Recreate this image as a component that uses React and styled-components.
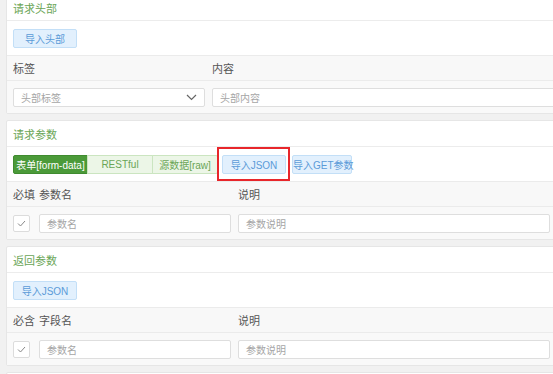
import React from 'react';
import styled, { createGlobalStyle } from 'styled-components';

const GlobalStyle = createGlobalStyle`
	html, body {
		margin: 0;
		padding: 0;
		background: #f1f1f1;
		overflow: hidden;
	}
	* {
		box-sizing: border-box;
	}
`;

const Page = styled.div`
	width: 640px;
	padding-left: 6px;
	margin-top: -6px;
	display: flex;
	flex-direction: column;
	row-gap: 6px;
	font-family: 'Liberation Sans', 'Noto Sans CJK SC', sans-serif;
	font-size: 11px;
	color: #555;
`;

const Panel = styled.section`
	min-height: ${({ $min }) => ($min ? `${$min}px` : '0')};
	background: #fff;
	border: 1px solid #e6e6e6;
	border-radius: 2px;
	display: flex;
	flex-direction: column;
`;

const PanelTitle = styled.div`
	height: 26px;
	padding: 0 6px;
	display: flex;
	align-items: center;
	color: #6aa556;
	border-bottom: 1px solid #ececec;
`;

const Toolbar = styled.div`
	height: 34px;
	padding: 0 6px;
	display: flex;
	align-items: center;
`;

const BlueButton = styled.button`
	height: 19px;
	width: ${({ $w }) => $w || 64}px;
	padding: 0;
	font-family: inherit;
	font-size: 10px;
	white-space: nowrap;
	color: #5b9bd8;
	background: #e2f0fd;
	border: 1px solid #c3dff7;
	border-radius: 2px;
	cursor: pointer;
`;

const TabGroup = styled.div`
	display: flex;
`;

const Tab = styled.button`
	height: 19px;
	width: ${({ $w }) => $w}px;
	padding: 0;
	margin-left: -1px;
	font-family: inherit;
	font-size: 10px;
	white-space: nowrap;
	color: ${({ $active }) => ($active ? '#fff' : '#6aa556')};
	background: ${({ $active }) => ($active ? '#4b9a39' : '#ecf6e7')};
	border: 1px solid ${({ $active }) => ($active ? '#3f8b2f' : '#cbe5c0')};
	&:first-child {
		margin-left: 0;
		border-radius: 2px 0 0 2px;
	}
	&:last-child {
		border-radius: 0 2px 2px 0;
	}
`;

const Highlight = styled.div`
	height: 34px;
	margin: 0 2px 0 -1px;
	padding: 0 2px 0 3px;
	border: 2px solid #e8262b;
	display: flex;
	align-items: center;
`;

const HeadRow = styled.div`
	height: 26px;
	padding: 0 6px;
	display: flex;
	align-items: center;
	background: #f8f8f8;
	border-top: 1px solid #ebebeb;
	border-bottom: 1px solid #ebebeb;
`;

const HeadCell = styled.div`
	width: ${({ $w }) => ($w ? `${$w}px` : 'auto')};
	flex: ${({ $w }) => ($w ? 'none' : '1')};
`;

const Row = styled.div`
	height: 32px;
	padding: 0 6px;
	display: flex;
	align-items: center;
	column-gap: 7px;
	background: #f9f9f9;
`;

const Field = styled.div`
	height: 19px;
	width: ${({ $w }) => ($w ? `${$w}px` : 'auto')};
	flex: ${({ $w }) => ($w ? 'none' : '1')};
	padding: 0 7px;
	display: flex;
	align-items: center;
	justify-content: space-between;
	background: #fff;
	border: 1px solid #dedede;
	border-radius: 2px;
	color: #a5a5a5;
	font-size: 10px;
`;

const Check = styled.div`
	width: 17px;
	height: 17px;
	margin-right: 2px;
	display: flex;
	align-items: center;
	justify-content: center;
	background: #fff;
	border: 1px solid #dcdcdc;
	border-radius: 2px;
`;

const Chevron = () => (
	<svg width='11' height='7' viewBox='0 0 11 7'>
		<path d='M1 1l4.5 4.5L10 1' fill='none' stroke='#666' strokeWidth='1.2' />
	</svg>
);

const Tick = () => (
	<svg width='9' height='7' viewBox='0 0 9 7'>
		<path d='M1 3.5l2.5 2.5L8 1' fill='none' stroke='#888' strokeWidth='1' />
	</svg>
);

const ParamTable = ({ required, name }) => (
	<>
		<HeadRow>
			<HeadCell $w={26}>{required}</HeadCell>
			<HeadCell $w={199}>{name}</HeadCell>
			<HeadCell>说明</HeadCell>
		</HeadRow>
		<Row>
			<Check>
				<Tick />
			</Check>
			<Field $w={192}>参数名</Field>
			<Field $w={312}>参数说明</Field>
		</Row>
	</>
);

const App = () => {
	return (
		<>
			<GlobalStyle />
			<Page>
				<Panel>
					<PanelTitle>请求头部</PanelTitle>
					<Toolbar>
						<BlueButton>导入头部</BlueButton>
					</Toolbar>
					<HeadRow>
						<HeadCell $w={199}>标签</HeadCell>
						<HeadCell>内容</HeadCell>
					</HeadRow>
					<Row>
						<Field $w={192}>
							头部标签
							<Chevron />
						</Field>
						<Field>头部内容</Field>
					</Row>
				</Panel>

				<Panel>
					<PanelTitle>请求参数</PanelTitle>
					<Toolbar>
						<TabGroup>
							<Tab $w={75} $active>
								表单[form-data]
							</Tab>
							<Tab $w={66}>RESTful</Tab>
							<Tab $w={66}>源数据[raw]</Tab>
						</TabGroup>
						<Highlight>
							<BlueButton>导入JSON</BlueButton>
						</Highlight>
						<BlueButton $w={60}>导入GET参数</BlueButton>
					</Toolbar>
					<ParamTable required='必填' name='参数名' />
				</Panel>

				<Panel>
					<PanelTitle>返回参数</PanelTitle>
					<Toolbar>
						<BlueButton>导入JSON</BlueButton>
					</Toolbar>
					<ParamTable required='必含' name='字段名' />
				</Panel>

				<Panel $min={40} />
			</Page>
		</>
	);
};

export default App;
